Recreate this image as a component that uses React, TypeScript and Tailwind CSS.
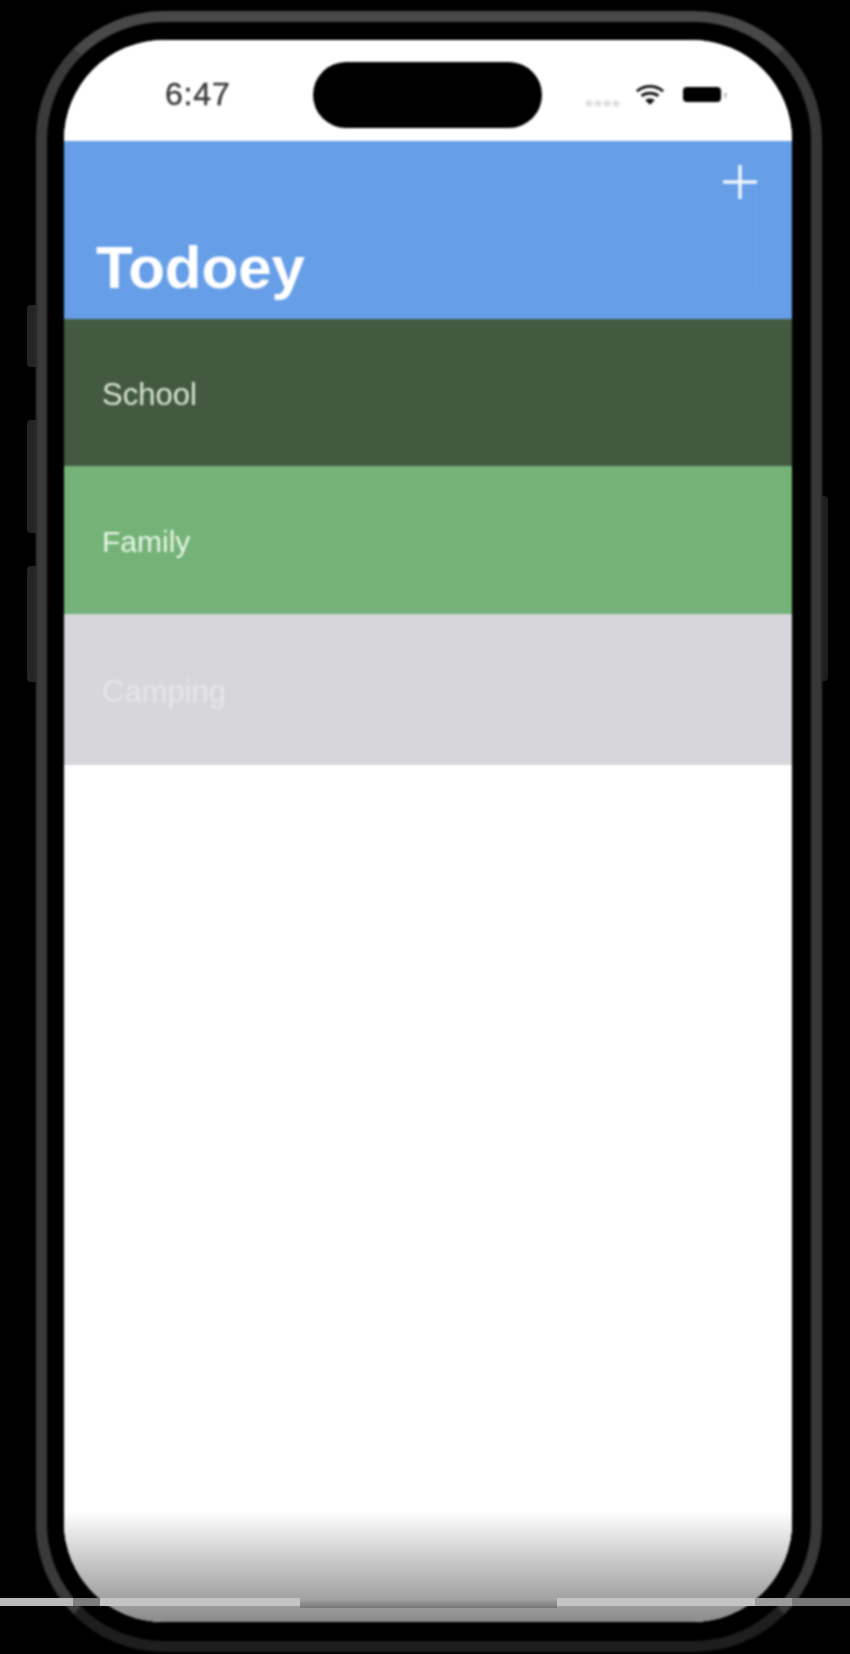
const sans = "font-['Liberation_Sans',Arial,sans-serif]";

const lists = [
  { name: "School", bg: "bg-[#445a40]", text: "text-[#dbe6d8] text-[31px]", h: "h-[147px]" },
  { name: "Family", bg: "bg-[#74b277]", text: "text-[#e8f6e6] text-[30px]", h: "h-[148px]" },
  { name: "Camping", bg: "bg-[#d7d7db]", text: "text-[#e6e6ea] text-[31px]", h: "h-[151px]" },
];

function StatusBar() {
  return (
    <div className="h-[101px] shrink-0 bg-white flex items-start relative">
      <div className={`${sans} w-[101px] ml-[101px] mt-[36px] text-[32px] leading-[36px] font-normal text-[#3a3a3a] tracking-[0.8px] [-webkit-text-stroke:0.4px_#3a3a3a] blur-[0.6px] shrink-0`}>
        6:47
      </div>
      <div className="ml-[47px] mt-[22px] w-[229px] h-[66px] rounded-full bg-black shrink-0" />
      <div className="ml-[44px] mt-[61px] flex gap-[3px] blur-[0.8px] shrink-0">
        <span className="w-[6px] h-[5px] bg-[#d8d8d8]" />
        <span className="w-[6px] h-[5px] bg-[#d8d8d8]" />
        <span className="w-[6px] h-[5px] bg-[#d8d8d8]" />
        <span className="w-[6px] h-[5px] bg-[#d8d8d8]" />
      </div>
      <svg className="ml-[16px] mt-[43px] blur-[0.4px] shrink-0" width="30" height="23" viewBox="0 0 32 24" fill="none">
        <path d="M2 8.5C10 1.5 22 1.5 30 8.5" stroke="#111" strokeWidth="3" />
        <path d="M7 13.5C12 9.5 20 9.5 25 13.5" stroke="#111" strokeWidth="3" />
        <path d="M16 23L11 18C14 15.8 18 15.8 21 18Z" fill="#111" />
      </svg>
      <div className="ml-[18px] mt-[47px] flex items-center blur-[0.6px] shrink-0">
        <div className="w-[38px] h-[15px] rounded-[4px] bg-black" />
        <div className="ml-[3px] w-[3px] h-[6px] rounded-r-sm bg-[#c8c8c8]" />
      </div>
    </div>
  );
}

export default function App() {
  return (
    <div className="relative w-[850px] h-[1654px] bg-black overflow-hidden pl-[36px] pt-[11px]">
      {/* side buttons */}
      <div className="absolute left-[27px] top-[305px] w-[9px] h-[62px] bg-[#242424] rounded-l-sm" />
      <div className="absolute left-[27px] top-[420px] w-[9px] h-[113px] bg-[#242424] rounded-l-sm" />
      <div className="absolute left-[27px] top-[566px] w-[9px] h-[116px] bg-[#242424] rounded-l-sm" />
      <div className="absolute left-[822px] top-[496px] w-[6px] h-[185px] bg-[#1e1e1e] rounded-r-sm" />

      <div className="w-[786px] h-[1641px] rounded-[128px] border-[11px] border-t-[#484848] border-l-[#3a3a3a] border-r-[#383838] border-b-[#1e1e1e] pl-[17px] pt-[18px] blur-[0.8px]">
        <div className="w-[728px] h-[1582px] rounded-[100px] overflow-hidden bg-white flex flex-col">
          <StatusBar />

          <div className="relative h-[178px] shrink-0 bg-[#669ee8] flex flex-col justify-between">
            <div className="flex justify-end pt-[23px] pr-[34px]">
              <svg width="36" height="36" viewBox="0 0 36 36" className="blur-[0.4px]">
                <path d="M18 1V35M1 18H35" stroke="#eef6ff" strokeWidth="3.5" />
              </svg>
            </div>
            <div className={`${sans} pl-[32px] pb-[21px] text-[60px] leading-none font-bold text-white blur-[0.4px]`}>
              Todoey
            </div>
            <div className="absolute left-[691px] top-[50px] w-px h-[95px] bg-[#74a6e9]" />
          </div>

          {lists.map((item) => (
            <div key={item.name} className={`${item.h} ${item.bg} shrink-0 flex items-center pl-[38px] pt-[4px]`}>
              <span className={`${sans} ${item.text} leading-none blur-[0.4px]`}>{item.name}</span>
            </div>
          ))}

          <div className="flex-1 flex flex-col justify-end bg-white">
            <div className="h-[111px] bg-gradient-to-b from-white to-[#8b8b8b]" />
          </div>
        </div>
      </div>

      {/* screen recording bar across the bottom */}
      <div className="absolute left-0 top-[1598px] w-[850px] flex items-start">
        <div className="w-[73px] h-[8px] bg-[#bbbbbb]" />
        <div className="w-[27px] h-[8px] bg-[#7c7c7c]" />
        <div className="w-[200px] h-[8px] bg-[#c4c4c4]" />
        <div className="w-[257px] h-[10px] bg-gradient-to-b from-[#a8a8a8] to-[#777777] blur-[0.4px]" />
        <div className="w-[198px] h-[8px] bg-[#c4c4c4]" />
        <div className="w-[37px] h-[8px] bg-[#9c9c9c]" />
        <div className="w-[58px] h-[8px] bg-[#777777]" />
      </div>
    </div>
  );
}
